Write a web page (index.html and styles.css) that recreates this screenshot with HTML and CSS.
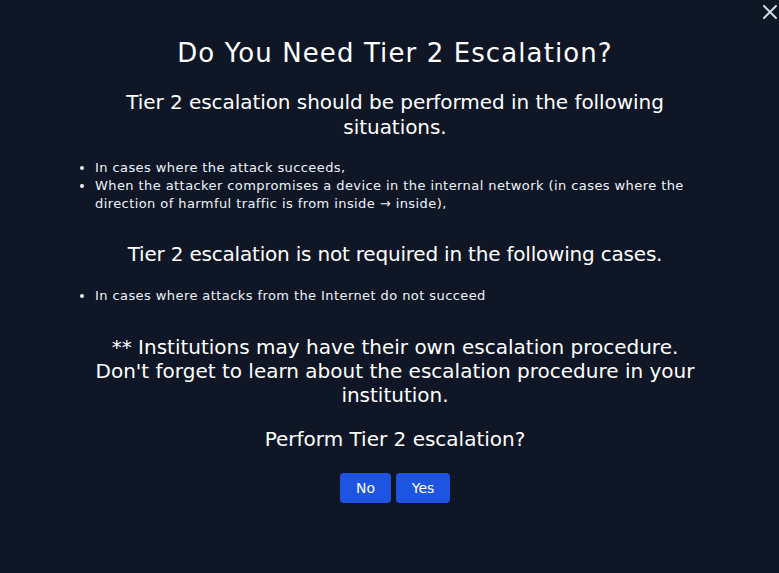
FILE: index.html
```html
<!DOCTYPE html>
<html>
<head>
<meta charset="utf-8">
<link rel="stylesheet" href="styles.css">
</head>
<body>
<div class="modal">
  <button class="close" aria-label="Close">
    <svg width="14" height="14" viewBox="0 0 14 14"><path d="M1 1L13 13M13 1L1 13" stroke="#d1d9e4" stroke-width="2" stroke-linecap="round"/></svg>
  </button>
  <div class="content">
    <h1 class="title">Do You Need Tier 2 Escalation?</h1>
    <p class="sub sub-1">Tier 2 escalation should be performed in the following situations.</p>
    <ul class="list list-1">
      <li>In cases where the attack succeeds,</li>
      <li>When the attacker compromises a device in the internal network (in cases where the direction of harmful traffic is from inside → inside),</li>
    </ul>
    <p class="sub sub-2">Tier 2 escalation is not required in the following cases.</p>
    <ul class="list list-2">
      <li>In cases where attacks from the Internet do not succeed</li>
    </ul>
    <p class="sub note">** Institutions may have their own escalation procedure. Don't forget to learn about the escalation procedure in your institution.</p>
    <p class="sub ask">Perform Tier 2 escalation?</p>
    <div class="actions">
      <button class="btn btn-no">No</button>
      <button class="btn btn-yes">Yes</button>
    </div>
  </div>
</div>
</body>
</html>
```
FILE: styles.css
```css
html, body {
  margin: 0;
  padding: 0;
  background: #0f1726;
}
body {
  width: 779px;
  height: 573px;
  overflow: hidden;
  font-family: "DejaVu Sans", "Noto Sans", sans-serif;
  color: #ffffff;
}
.modal {
  position: relative;
  height: 573px;
  box-sizing: border-box;
  padding: 37px 84px 0 95px;
}
.close {
  position: absolute;
  top: 5px;
  right: 2px;
  width: 14px;
  height: 14px;
  padding: 0;
  border: 0;
  background: none;
  display: flex;
}
.content {
  width: 600px;
  display: flex;
  flex-direction: column;
  align-items: stretch;
  text-align: center;
}
.title {
  margin: 0;
  font-size: 26px;
  line-height: 32px;
  font-weight: 400;
  letter-spacing: 1.1px;
}
.sub {
  margin: 0;
  font-size: 20px;
  line-height: 25px;
}
.sub-1 { margin-top: 21px; letter-spacing: -0.05px; }
.list {
  margin: 0;
  padding-left: 0;
  list-style: disc outside;
  text-align: left;
  font-size: 13px;
  line-height: 18px;
  letter-spacing: 0.42px;
  color: #eef3fb;
}
.list-1 { margin-top: 19px; }
.sub-2 { margin-top: 29px; letter-spacing: -0.2px; }
.list-2 { margin-top: 20px; }
.note {
  margin-top: 30px;
  line-height: 24px;
}
.ask {
  margin-top: 20px;
  line-height: 24px;
}
.actions {
  margin-top: 22px;
  display: flex;
  justify-content: center;
  gap: 5px;
}
.btn {
  height: 30px;
  border: 0;
  border-radius: 4px;
  background: #1d55e0;
  color: #ffffff;
  font-family: "DejaVu Sans", sans-serif;
  font-size: 14px;
  padding: 0;
}
.btn-no { width: 51px; }
.btn-yes { width: 54px; }
```
